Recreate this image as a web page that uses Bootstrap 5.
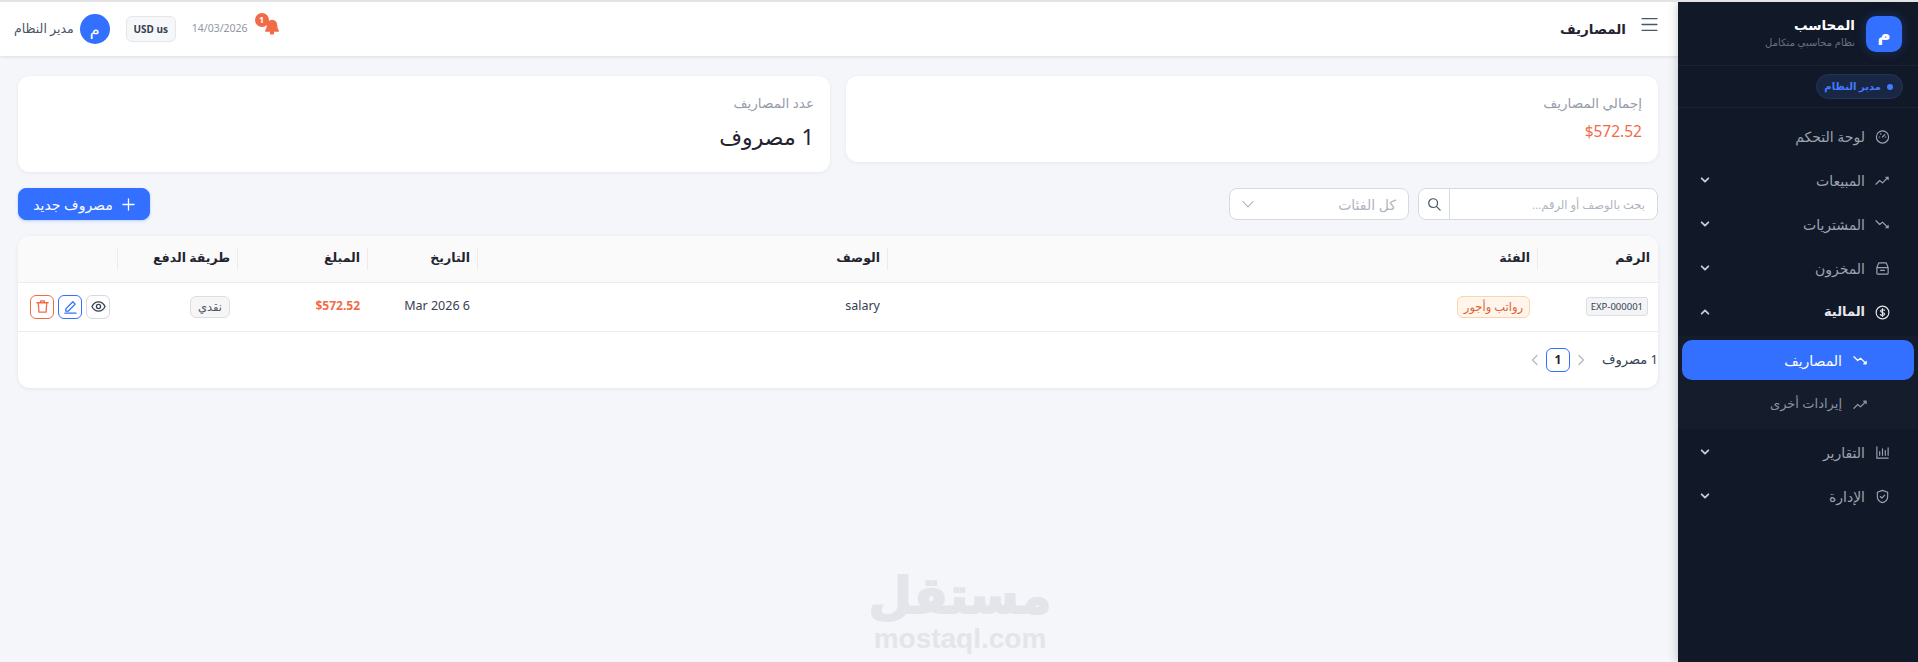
<!DOCTYPE html>
<html lang="ar" dir="rtl">
<head>
  <meta charset="UTF-8">
  <title>المصاريف - المحاسب</title>
  <link href="https://cdn.jsdelivr.net/npm/bootstrap@5.3.3/dist/css/bootstrap.min.css" rel="stylesheet">
  <style>
    html, body { height: 100%; }
    body {
      font-family: "Noto Sans", "DejaVu Sans", sans-serif;
      background: #f4f6fa;
      color: #1f2430;
      overflow: hidden;
      border-top: 2px solid #e3e3e5;
    }
    svg { display: block; fill: none; stroke: currentColor; stroke-width: 1.4; stroke-linecap: round; stroke-linejoin: round; }

    /* sidebar */
    .side-panel { width: 240px; flex: none; background: #111827; color: #9ca3af; box-shadow: 0 0 10px rgba(0,0,0,.22); position: relative; z-index: 2; }
    .side-head { height: 64px; padding: 14px 16px 0; gap: 11px; border-bottom: 1px solid #1d2535; }
    .side-logo { width: 36px; height: 36px; border-radius: 10px; background: #3370ff; color: #fff; font-size: 18px; font-weight: 700; box-shadow: 0 0 12px rgba(51,112,255,.3); }
    .side-title { color: #fff; font-size: 13.5px; font-weight: 700; line-height: 18px; }
    .side-sub { color: #6b7280; font-size: 10px; line-height: 16px; }
    .side-role { height: 42px; padding: 0 15px; border-bottom: 1px solid #1d2535; }
    .role-pill { height: 25px; width: 87px; flex: none; border-radius: 13px; background: #1a2744; border: 1px solid #243455; color: #3f7cff; font-size: 10px; font-weight: 700; gap: 6px; padding: 0 9px; }
    .role-dot { width: 6px; height: 6px; flex: none; border-radius: 50%; background: #3f7cff; }
    .side-menu { padding-top: 6px; }
    .menu-row { height: 44px; padding: 0 28px 0 0; gap: 10px; color: #9ca3af; font-size: 14px; }
    .menu-row svg.ico { width: 15px; height: 15px; stroke-width: 1.25; }
    .menu-row .chev { width: 10px; height: 10px; margin-left: 22px; margin-inline-start: auto; stroke-width: 2.2; color: #c5c9d0; }
    .menu-open { color: #e5e7eb; font-weight: 700; font-size: 13px; }
    .menu-sub { background: #151c2b; padding: 4px 0 3px; margin-top: 2px; margin-bottom: 1px; }
    .sub-row { height: 44px; padding-right: 46px; gap: 11px; color: #8b93a1; font-size: 13px; margin: 0 4px; border-radius: 10px; }
    .sub-row svg { width: 15px; height: 15px; }
    .sub-on { height: 40px; margin-bottom: 2px; background: #3370ff; color: #fff; font-size: 14px; }

    /* main */
    .main-area { min-width: 0; position: relative; }
    .top-strip { height: 54px; background: #fff; padding: 0 20px 0 14px; box-shadow: 0 1px 3px rgba(0,0,0,.1); }
    .burger { width: 17px; height: 17px; color: #4b5563; margin-top: -10px; margin-left: 15px; stroke-width: 1.2; }
    .page-name { font-size: 13.5px; font-weight: 700; color: #1f2430; }
    .bell-box { width: 20px; height: 20px; color: #f26b47; margin-left: 14px; position: relative; }
    .bell-box svg { width: 16px; height: 16px; fill: currentColor; position: absolute; left: 2px; top: 0; }
    .bell-num { position: absolute; top: -6px; left: -7px; width: 14px; height: 14px; border-radius: 50%; background: #f26b47; color: #fff; font-size: 9px; font-weight: 700; line-height: 14px; text-align: center; }
    .date-txt { font-size: 10.5px; color: #8f96a3; margin-left: 16px; }
    .cur-pill { height: 26px; width: 50px; border: 1px solid #e4e6ea; background: #f6f7f9; border-radius: 6px; font-size: 10px; font-weight: 700; color: #374151; margin-left: 16px; }
    .user-dot { width: 30px; height: 30px; border-radius: 50%; background: #3370ff; color: #fff; font-size: 16px; margin-left: 6px; }
    .user-name { font-size: 12.5px; color: #4b5563; }

    .page-body { padding: 20px 20px 0 18px; }
    .stat-box { flex: 1 1 0; background: #fff; border-radius: 12px; padding: 16px 16px 17px; box-shadow: 0 1px 4px rgba(0,0,0,.06); }
    .stat-label { font-size: 13.5px; color: #969ca8; line-height: 22px; }
    .stat-amount { font-size: 15.5px; color: #f26b47; line-height: 24px; margin-top: 5px; height: 26px; }
    .stat-count { font-size: 22px; color: #1f2430; line-height: 30px; margin-top: 7px; height: 34px; }

    .tool-row { margin-top: 16px; height: 32px; }
    .find-box { width: 240px; height: 32px; border: 1px solid #d6d9de; border-radius: 8px; background: #fff; overflow: hidden; }
    .find-box .form-control { height: 30px; font-size: 11.5px; padding: 0 12px; border: 0; border-radius: 0; background: transparent; box-shadow: none; }
    .find-box .form-control::placeholder { color: #b0b5bd; }
    .find-ico { width: 31px; height: 30px; flex: none; border-right: 1px solid #d6d9de; color: #4b5563; }
    .cat-pick { width: 180px; height: 32px; border: 1px solid #d6d9de; border-radius: 8px; background: #fff; padding: 0 12px; font-size: 14px; color: #b0b5bd; margin-right: 9px; }
    .cat-pick svg { width: 12px; height: 12px; color: #a8adb5; stroke-width: 1.1; }
    .add-btn { width: 132px; height: 32px; background: #3370ff; border-color: #3370ff; border-radius: 8px; font-size: 14px; padding: 0; gap: 9px; box-shadow: 0 1px 3px rgba(51,112,255,.3); }
    .add-btn svg { width: 13px; height: 13px; }

    .grid-card { margin-top: 16px; height: 152px; background: #fff; border-radius: 12px; box-shadow: 0 1px 4px rgba(0,0,0,.07); overflow: hidden; }
    .exp-table { table-layout: fixed; width: 100%; margin: 0; }
    .exp-table th { height: 46px; background: #fafafa; font-size: 12.5px; font-weight: 700; color: #1f2430; padding: 0 8px; border-bottom: 1px solid #ececee; vertical-align: middle; position: relative; }
    .exp-table th + th::before { content: ""; position: absolute; right: 0; top: 12px; bottom: 12px; border-right: 1px solid #ececee; }
    .exp-table td { height: 49px; font-size: 12.5px; padding: 0 8px; border-bottom: 1px solid #ececee; vertical-align: middle; color: #374151; }
    .exp-table td:first-child { padding-right: 10px; }
    .c-num { width: 120px; } .c-cat { width: 650px; } .c-desc { width: 410px; } .c-date { width: 110px; } .c-amt { width: 130px; } .c-pay { width: 120px; }
    .num-tag { display: inline-block; background: #f3f4f6; border: 1px solid #dcdee2; border-radius: 3px; font-size: 9.5px; line-height: 17px; padding: 0 4px; color: #374151; }
    .cat-tag { display: inline-block; background: #fff5eb; border: 1px solid #fbd5a8; color: #e0623a; border-radius: 6px; font-size: 11.5px; line-height: 20px; padding: 0 6px; }
    .amt-txt { color: #f26b47; font-weight: 700; font-size: 12px; }
    .pay-tag { display: inline-block; background: #f6f6f7; border: 1px solid #dcdee2; color: #4b5563; border-radius: 6px; font-size: 11.5px; line-height: 20px; padding: 0 7px; }
    .act-btn { width: 24px; height: 24px; padding: 0; border-radius: 6px; background: #fff; border: 1px solid; }
    .act-btn svg { width: 15px; height: 15px; }
    .act-view { color: #374151; border-color: #d6d9de; }
    .act-edit { color: #3370ff; border-color: #3370ff; }
    .act-del { color: #f26b47; border-color: #f26b47; }

    .grid-foot { height: 57px; }
    .foot-count { font-size: 13px; color: #374151; width: 58px; margin-left: 13px; white-space: nowrap; }
    .pg-arrow { width: 12px; height: 12px; color: #b6bbc3; }
    .pg-on { width: 24px; height: 24px; border: 1px solid #3370ff; border-radius: 6px; font-size: 12px; font-weight: 700; color: #1f2430; margin: 0 5px; background: #fff; }

    .wm-mark { position: absolute; left: 862px; top: 561px; width: 196px; color: #e3e5ea; text-align: center; font-weight: 700; pointer-events: none; }
    .wm-ar { font-size: 50px; line-height: 62px; -webkit-text-stroke: 2px #e3e5ea; }
    .wm-en { font-family: "Liberation Sans", sans-serif; font-size: 28px; line-height: 28px; direction: ltr; }
  </style>
</head>
<body>

<div class="d-flex h-100">
  <aside class="side-panel">
    <div class="side-head d-flex align-items-start">
      <div class="side-logo d-flex align-items-center justify-content-center flex-shrink-0">م</div>
      <div>
        <div class="side-title">المحاسب</div>
        <div class="side-sub">نظام محاسبي متكامل</div>
      </div>
    </div>
    <div class="side-role d-flex align-items-center">
      <div class="role-pill d-flex align-items-center text-nowrap"><span class="role-dot"></span>مدير النظام</div>
    </div>
    <nav class="side-menu">
      <div class="menu-row d-flex align-items-center">
        <svg class="ico" viewBox="0 0 16 16"><circle cx="8" cy="8.5" r="6.500"/><path d="M8 8.500l2.500-2.500M4.500 8.500h.5M11 8.500h.5M6 5l.3.5"/></svg>
        <span>لوحة التحكم</span>
      </div>
      <div class="menu-row d-flex align-items-center">
        <svg class="ico" viewBox="0 0 16 16"><path d="M1 12l4-4 3 2.500 6-6M11.500 4.500H14V7"/></svg>
        <span>المبيعات</span>
        <svg class="chev" viewBox="0 0 12 12"><path d="M2 4l4 4 4-4"/></svg>
      </div>
      <div class="menu-row d-flex align-items-center">
        <svg class="ico" viewBox="0 0 16 16"><path d="M1 4l4 4 3-2.500 6 6M11.500 11.500H14V9"/></svg>
        <span>المشتريات</span>
        <svg class="chev" viewBox="0 0 12 12"><path d="M2 4l4 4 4-4"/></svg>
      </div>
      <div class="menu-row d-flex align-items-center">
        <svg class="ico" viewBox="0 0 16 16"><path d="M4 2h8l2 5v6a1 1 0 0 1-1 1H3a1 1 0 0 1-1-1V7zM2 7h12M6 10h4"/></svg>
        <span>المخزون</span>
        <svg class="chev" viewBox="0 0 12 12"><path d="M2 4l4 4 4-4"/></svg>
      </div>
      <div class="menu-row menu-open d-flex align-items-center">
        <svg class="ico" viewBox="0 0 16 16"><circle cx="8" cy="8" r="6.800"/><path d="M10.200 5.600C9.600 4.900 6 4.600 6 6.400S10.300 7.800 10.300 9.700 6.400 11.200 5.700 10.300M8 3.800v8.400"/></svg>
        <span>المالية</span>
        <svg class="chev" viewBox="0 0 12 12"><path d="M2 8l4-4 4 4"/></svg>
      </div>
      <div class="menu-sub">
        <div class="sub-row sub-on d-flex align-items-center">
          <svg viewBox="0 0 16 16"><path d="M1 4l4 4 3-2.500 6 6M11.500 11.500H14V9"/></svg>
          <span>المصاريف</span>
        </div>
        <div class="sub-row d-flex align-items-center">
          <svg viewBox="0 0 16 16"><path d="M1 12l4-4 3 2.500 6-6M11.500 4.500H14V7"/></svg>
          <span>إيرادات أخرى</span>
        </div>
      </div>
      <div class="menu-row d-flex align-items-center">
        <svg class="ico" viewBox="0 0 16 16"><path d="M2 2v12h12M5 11V7M8 11V4M11 11V6M14 11V3"/></svg>
        <span>التقارير</span>
        <svg class="chev" viewBox="0 0 12 12"><path d="M2 4l4 4 4-4"/></svg>
      </div>
      <div class="menu-row d-flex align-items-center">
        <svg class="ico" viewBox="0 0 16 16"><path d="M8 1.500l5.500 2v4.500c0 3.300-2.400 5.600-5.500 6.500-3.100-.9-5.500-3.200-5.500-6.500V3.500zM5.700 8l1.700 1.700 3-3.200"/></svg>
        <span>الإدارة</span>
        <svg class="chev" viewBox="0 0 12 12"><path d="M2 4l4 4 4-4"/></svg>
      </div>
    </nav>
  </aside>

  <main class="main-area flex-grow-1">
    <header class="top-strip d-flex align-items-center">
      <svg class="burger flex-shrink-0" viewBox="0 0 16 16"><path d="M1 2.500h14M1 8h14M1 13.500h14"/></svg>
      <div class="page-name">المصاريف</div>
      <div class="d-flex align-items-center me-auto">
        <div class="bell-box">
          <svg viewBox="0 0 16 16"><path d="M8 1.500a4.500 4.500 0 0 0-4.500 4.500c0 4-1.800 5.500-1.800 6h12.600c0-.5-1.800-2-1.800-6A4.500 4.500 0 0 0 8 1.500zM6.500 13.500a1.500 1.500 0 0 0 3 0z"/></svg>
          <span class="bell-num">1</span>
        </div>
        <span class="date-txt">14/03/2026</span>
        <span class="cur-pill d-flex align-items-center justify-content-center" dir="ltr">USD us</span>
        <span class="user-dot d-flex align-items-center justify-content-center">م</span>
        <span class="user-name">مدير النظام</span>
      </div>
    </header>

    <div class="page-body">
      <div class="d-flex align-items-start gap-3">
        <div class="stat-box">
          <div class="stat-label">إجمالي المصاريف</div>
          <div class="stat-amount">$572.52</div>
        </div>
        <div class="stat-box">
          <div class="stat-label">عدد المصاريف</div>
          <div class="stat-count">1 مصروف</div>
        </div>
      </div>

      <div class="tool-row d-flex align-items-center">
        <div class="find-box d-flex align-items-center">
          <input type="text" class="form-control" placeholder="بحث بالوصف أو الرقم...">
          <span class="find-ico d-flex align-items-center justify-content-center"><svg width="14" height="14" viewBox="0 0 16 16"><circle cx="7" cy="7" r="5"/><path d="M11 11l4 4"/></svg></span>
        </div>
        <div class="cat-pick d-flex align-items-center justify-content-between">
          <span>كل الفئات</span>
          <svg viewBox="0 0 12 12"><path d="M1 3.500l5 5.500 5-5.500"/></svg>
        </div>
        <button class="btn btn-primary add-btn d-flex align-items-center justify-content-center me-auto" type="button">
          <svg viewBox="0 0 14 14"><path d="M7 1v12M1 7h12"/></svg>
          مصروف جديد
        </button>
      </div>

      <div class="grid-card">
        <table class="table exp-table">
          <thead>
            <tr>
              <th class="c-num">الرقم</th>
              <th class="c-cat">الفئة</th>
              <th class="c-desc">الوصف</th>
              <th class="c-date">التاريخ</th>
              <th class="c-amt">المبلغ</th>
              <th class="c-pay">طريقة الدفع</th>
              <th></th>
            </tr>
          </thead>
          <tbody>
            <tr>
              <td><span class="num-tag">EXP-000001</span></td>
              <td><span class="cat-tag">رواتب وأجور</span></td>
              <td>salary</td>
              <td>6 Mar 2026</td>
              <td><span class="amt-txt">$572.52</span></td>
              <td><span class="pay-tag">نقدي</span></td>
              <td>
                <div class="d-flex gap-1">
                  <button class="btn act-btn act-view d-flex align-items-center justify-content-center" type="button" aria-label="عرض"><svg viewBox="0 0 16 16"><path d="M1 8s2.500-5 7-5 7 5 7 5-2.500 5-7 5-7-5-7-5z"/><circle cx="8" cy="8" r="2.200"/></svg></button>
                  <button class="btn act-btn act-edit d-flex align-items-center justify-content-center" type="button" aria-label="تعديل"><svg viewBox="0 0 16 16"><path d="M3 10.500L10.500 3l2.500 2.500L5.500 13H3zM2 15h12"/></svg></button>
                  <button class="btn act-btn act-del d-flex align-items-center justify-content-center" type="button" aria-label="حذف"><svg viewBox="0 0 16 16"><path d="M2 4h12M6 4V2h4v2M3.500 4l.7 10h7.600l.7-10"/></svg></button>
                </div>
              </td>
            </tr>
          </tbody>
        </table>
        <div class="grid-foot d-flex align-items-center">
          <span class="foot-count">1 مصروف</span>
          <svg class="pg-arrow" viewBox="0 0 12 12"><path d="M4 1.500L8.500 6 4 10.500"/></svg>
          <span class="pg-on d-flex align-items-center justify-content-center">1</span>
          <svg class="pg-arrow" viewBox="0 0 12 12"><path d="M8 1.500L3.500 6 8 10.500"/></svg>
        </div>
      </div>
    </div>

    <div class="wm-mark">
      <div class="wm-ar">مستقل</div>
      <div class="wm-en">mostaql.com</div>
    </div>
  </main>
</div>

<script src="https://cdn.jsdelivr.net/npm/bootstrap@5.3.3/dist/js/bootstrap.bundle.min.js"></script>
</body>
</html>
